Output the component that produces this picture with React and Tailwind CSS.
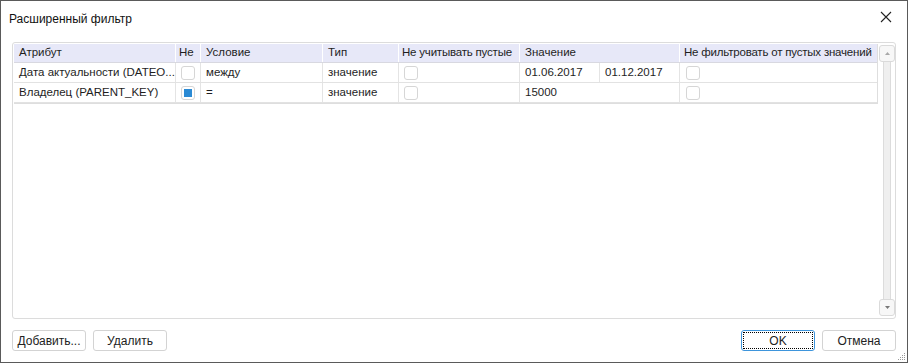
import React from 'react';

const font = { fontFamily: '"Liberation Sans", Arial, sans-serif' };

const rows = [
	{ attr: 'Дата актуальности (DATEO...', ne: false, cond: 'между', type: 'значение', v1: '01.06.2017', v2: '01.12.2017' },
	{ attr: 'Владелец (PARENT_KEY)', ne: true, cond: '=', type: 'значение', v1: '15000', v2: '' },
];

const cols = 'grid grid-cols-[162px_25px_122px_76px_121px_80px_80px_198px]';

const Check = ({ checked }) => (
	<div className="w-[14px] h-[14px] rounded-[3px] border border-[#d6d6d6] bg-white flex items-center justify-center">
		{checked && <div className="w-[8px] h-[8px] bg-[#2b8ad4]" />}
	</div>
);

const Btn = ({ children, primary }) => (
	<button
		className={
			'h-[21px] w-[74px] rounded-[3px] bg-white text-[12px] text-[#222] flex items-center justify-center ' +
			(primary ? 'border border-[#3e95dc] p-[1px]' : 'border border-[#d3d3d3]')
		}
	>
		{primary ? (
			<span className="w-full h-full border border-dotted border-black flex items-center justify-center">
				{children}
			</span>
		) : (
			children
		)}
	</button>
);

const App = () => {
	return (
		<div
			className="w-[908px] h-[363px] bg-white border-[1.5px] border-[#5a5a5a] flex flex-col text-[#1e1e1e]"
			style={font}
		>
			<div className="h-[41px] flex items-start justify-between pl-[8px] pr-[15px] pt-[9px]">
				<span className="text-[12px] text-[#111]">Расширенный фильтр</span>
				<svg width="12" height="12" viewBox="0 0 12 12" className="mt-[1px]">
					<path d="M1 1L11 11M11 1L1 11" stroke="#222" strokeWidth="1.1" />
				</svg>
			</div>

			<div className="mx-[11px] h-[277px] border border-[#dcdcdc] rounded-[3px] flex">
				<div className="w-[865px] pl-[1px] pt-[1px]">
					<div className="border border-[#dedede] border-t-0 border-l-0">
						<div className={cols + ' h-[19px] bg-[#e7e8f8] text-[11.5px] items-center border-b border-[#d8d8e0]'}>
							<div className="pl-[5px] border-r border-white h-full flex items-center">Атрибут</div>
							<div className="pl-[3px] border-r border-white h-full flex items-center">Не</div>
							<div className="pl-[5px] border-r border-white h-full flex items-center">Условие</div>
							<div className="pl-[5px] border-r border-white h-full flex items-center">Тип</div>
							<div className="pl-[3px] border-r border-white h-full flex items-center whitespace-nowrap tracking-[-0.2px]">Не учитывать пустые</div>
							<div className="col-span-2 pl-[5px] border-r border-white h-full flex items-center">Значение</div>
							<div className="pl-[4px] h-full flex items-center whitespace-nowrap tracking-[-0.2px]">Не фильтровать от пустых значений</div>
						</div>
						{rows.map((r, i) => (
							<div key={i} className={cols + ' h-[20px] text-[11.5px] border-b border-[#e2e2e2]'}>
								<div className="pl-[5px] border-r border-[#e4e4e4] flex items-center whitespace-nowrap overflow-hidden">{r.attr}</div>
								<div className="border-r border-[#e4e4e4] flex items-center justify-center">
									<Check checked={r.ne} />
								</div>
								<div className="pl-[5px] border-r border-[#e4e4e4] flex items-center">{r.cond}</div>
								<div className="pl-[5px] border-r border-[#e4e4e4] flex items-center">{r.type}</div>
								<div className="pl-[5px] border-r border-[#e4e4e4] flex items-center">
									<Check />
								</div>
								{r.v2 ? (
									<>
										<div className="pl-[5px] border-r border-[#e4e4e4] flex items-center">{r.v1}</div>
										<div className="pl-[5px] border-r border-[#e4e4e4] flex items-center">{r.v2}</div>
									</>
								) : (
									<div className="col-span-2 pl-[5px] border-r border-[#e4e4e4] flex items-center">{r.v1}</div>
								)}
								<div className="pl-[6px] flex items-center">
									<Check />
								</div>
							</div>
						))}
					</div>
				</div>
				<div className="w-[18px] ml-[1px] flex flex-col items-center pt-[2px] pb-[2px]">
					<div className="w-[16px] h-[17px] border border-[#dadada] rounded-[3px] bg-[#f7f7f7] flex items-center justify-center">
						<svg width="5" height="3" viewBox="0 0 5 3">
							<path d="M0 3L2.5 0L5 3Z" fill="#a8a8a8" />
						</svg>
					</div>
					<div className="flex-1 w-[8px] bg-[#efefef] border-x border-[#dcdcdc]" />
					<div className="w-[16px] h-[17px] border border-[#dadada] rounded-[3px] bg-[#f7f7f7] flex items-center justify-center">
						<svg width="5" height="3" viewBox="0 0 5 3">
							<path d="M0 0L5 0L2.5 3Z" fill="#777" />
						</svg>
					</div>
				</div>
			</div>

			<div className="flex items-center justify-between px-[11px] mt-[11px] relative flex-1">
				<div className="flex gap-[7px] self-start">
					<Btn>Добавить...</Btn>
					<Btn>Удалить</Btn>
				</div>
				<div className="flex gap-[7px] self-start">
					<Btn primary>OK</Btn>
					<Btn>Отмена</Btn>
				</div>
				<svg width="8" height="8" viewBox="0 0 8 8" className="absolute right-[1px] bottom-[1px]">
					<rect x="6" y="0" width="1" height="1" fill="#999" />
					<rect x="4" y="2" width="1" height="1" fill="#999" />
					<rect x="6" y="2" width="1" height="1" fill="#999" />
					<rect x="2" y="4" width="1" height="1" fill="#999" />
					<rect x="4" y="4" width="1" height="1" fill="#999" />
					<rect x="6" y="4" width="1" height="1" fill="#999" />
					<rect x="0" y="6" width="1" height="1" fill="#999" />
					<rect x="2" y="6" width="1" height="1" fill="#999" />
					<rect x="4" y="6" width="1" height="1" fill="#999" />
					<rect x="6" y="6" width="1" height="1" fill="#999" />
				</svg>
			</div>
		</div>
	);
};

export default App;
